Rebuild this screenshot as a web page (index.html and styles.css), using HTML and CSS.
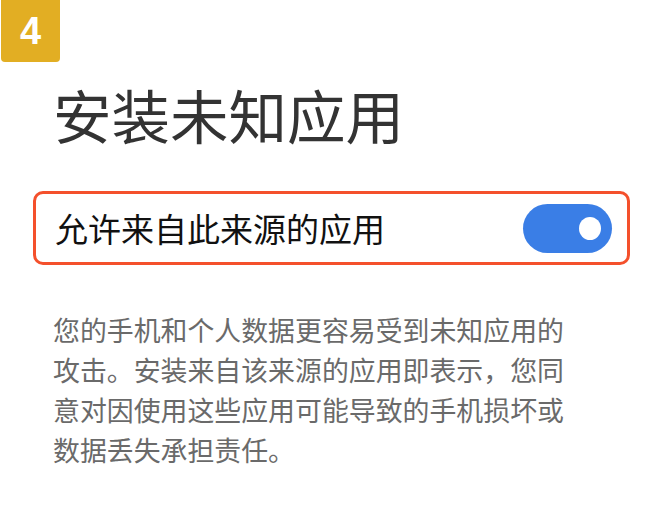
FILE: index.html
```html
<!DOCTYPE html>
<html lang="zh-CN">
<head>
  <meta charset="UTF-8">
  <meta name="viewport" content="width=device-width, initial-scale=1.0">
  <title>安装未知应用</title>
  <link rel="stylesheet" href="styles.css">
</head>
<body>
  <div class="step-badge">4</div>

  <div class="page">
    <h1 class="title">安装未知应用</h1>

    <div class="setting-row">
      <span class="setting-label">允许来自此来源的应用</span>
      <div class="switch switch-on">
        <div class="switch-knob"></div>
      </div>
    </div>

    <p class="warning">
      您的手机和个人数据更容易受到未知应用的攻击。安装来自该来源的应用即表示，您同意对因使用这些应用可能导致的手机损坏或数据丢失承担责任。
    </p>
  </div>
</body>
</html>
```

FILE: styles.css
```css
body {
  margin: 0;
  padding: 0;
  background-color: #ffffff;
  font-family: 'Noto Sans CJK SC', 'Noto Sans', sans-serif;
  width: 663px;
  height: 520px;
  overflow: hidden;
}

.step-badge {
  width: 59px;
  height: 62px;
  margin-left: 1px;
  background-color: #e2ae23;
  border-radius: 0 0 4px 4px;
  color: #ffffff;
  font-family: 'Liberation Sans', Arial, sans-serif;
  font-weight: bold;
  font-size: 38px;
  display: flex;
  align-items: center;
  justify-content: center;
}

.page {
  padding: 0 33px;
}

.title {
  margin: 16px 0 0 20px;
  font-size: 58.5px;
  font-weight: 400;
  line-height: 72px;
  color: #333333;
}

.setting-row {
  margin-top: 41px;
  height: 68px;
  border: 3px solid #f4502c;
  border-radius: 10px;
  display: flex;
  align-items: center;
  justify-content: space-between;
  padding: 0 15px 0 19px;
}

.setting-label {
  font-size: 33px;
  color: #111111;
}

.switch {
  width: 89px;
  height: 49px;
  border-radius: 25px;
  background-color: #3a7ee6;
  display: flex;
  align-items: center;
  justify-content: flex-end;
  padding-right: 11px;
  box-sizing: border-box;
}

.switch-knob {
  width: 22px;
  height: 23px;
  border-radius: 50%;
  background-color: #ffffff;
}

.warning {
  margin: 45px 0 0 20px;
  width: 530px;
  font-size: 26.9px;
  line-height: 40px;
  color: #6a6a6a;
}
```
